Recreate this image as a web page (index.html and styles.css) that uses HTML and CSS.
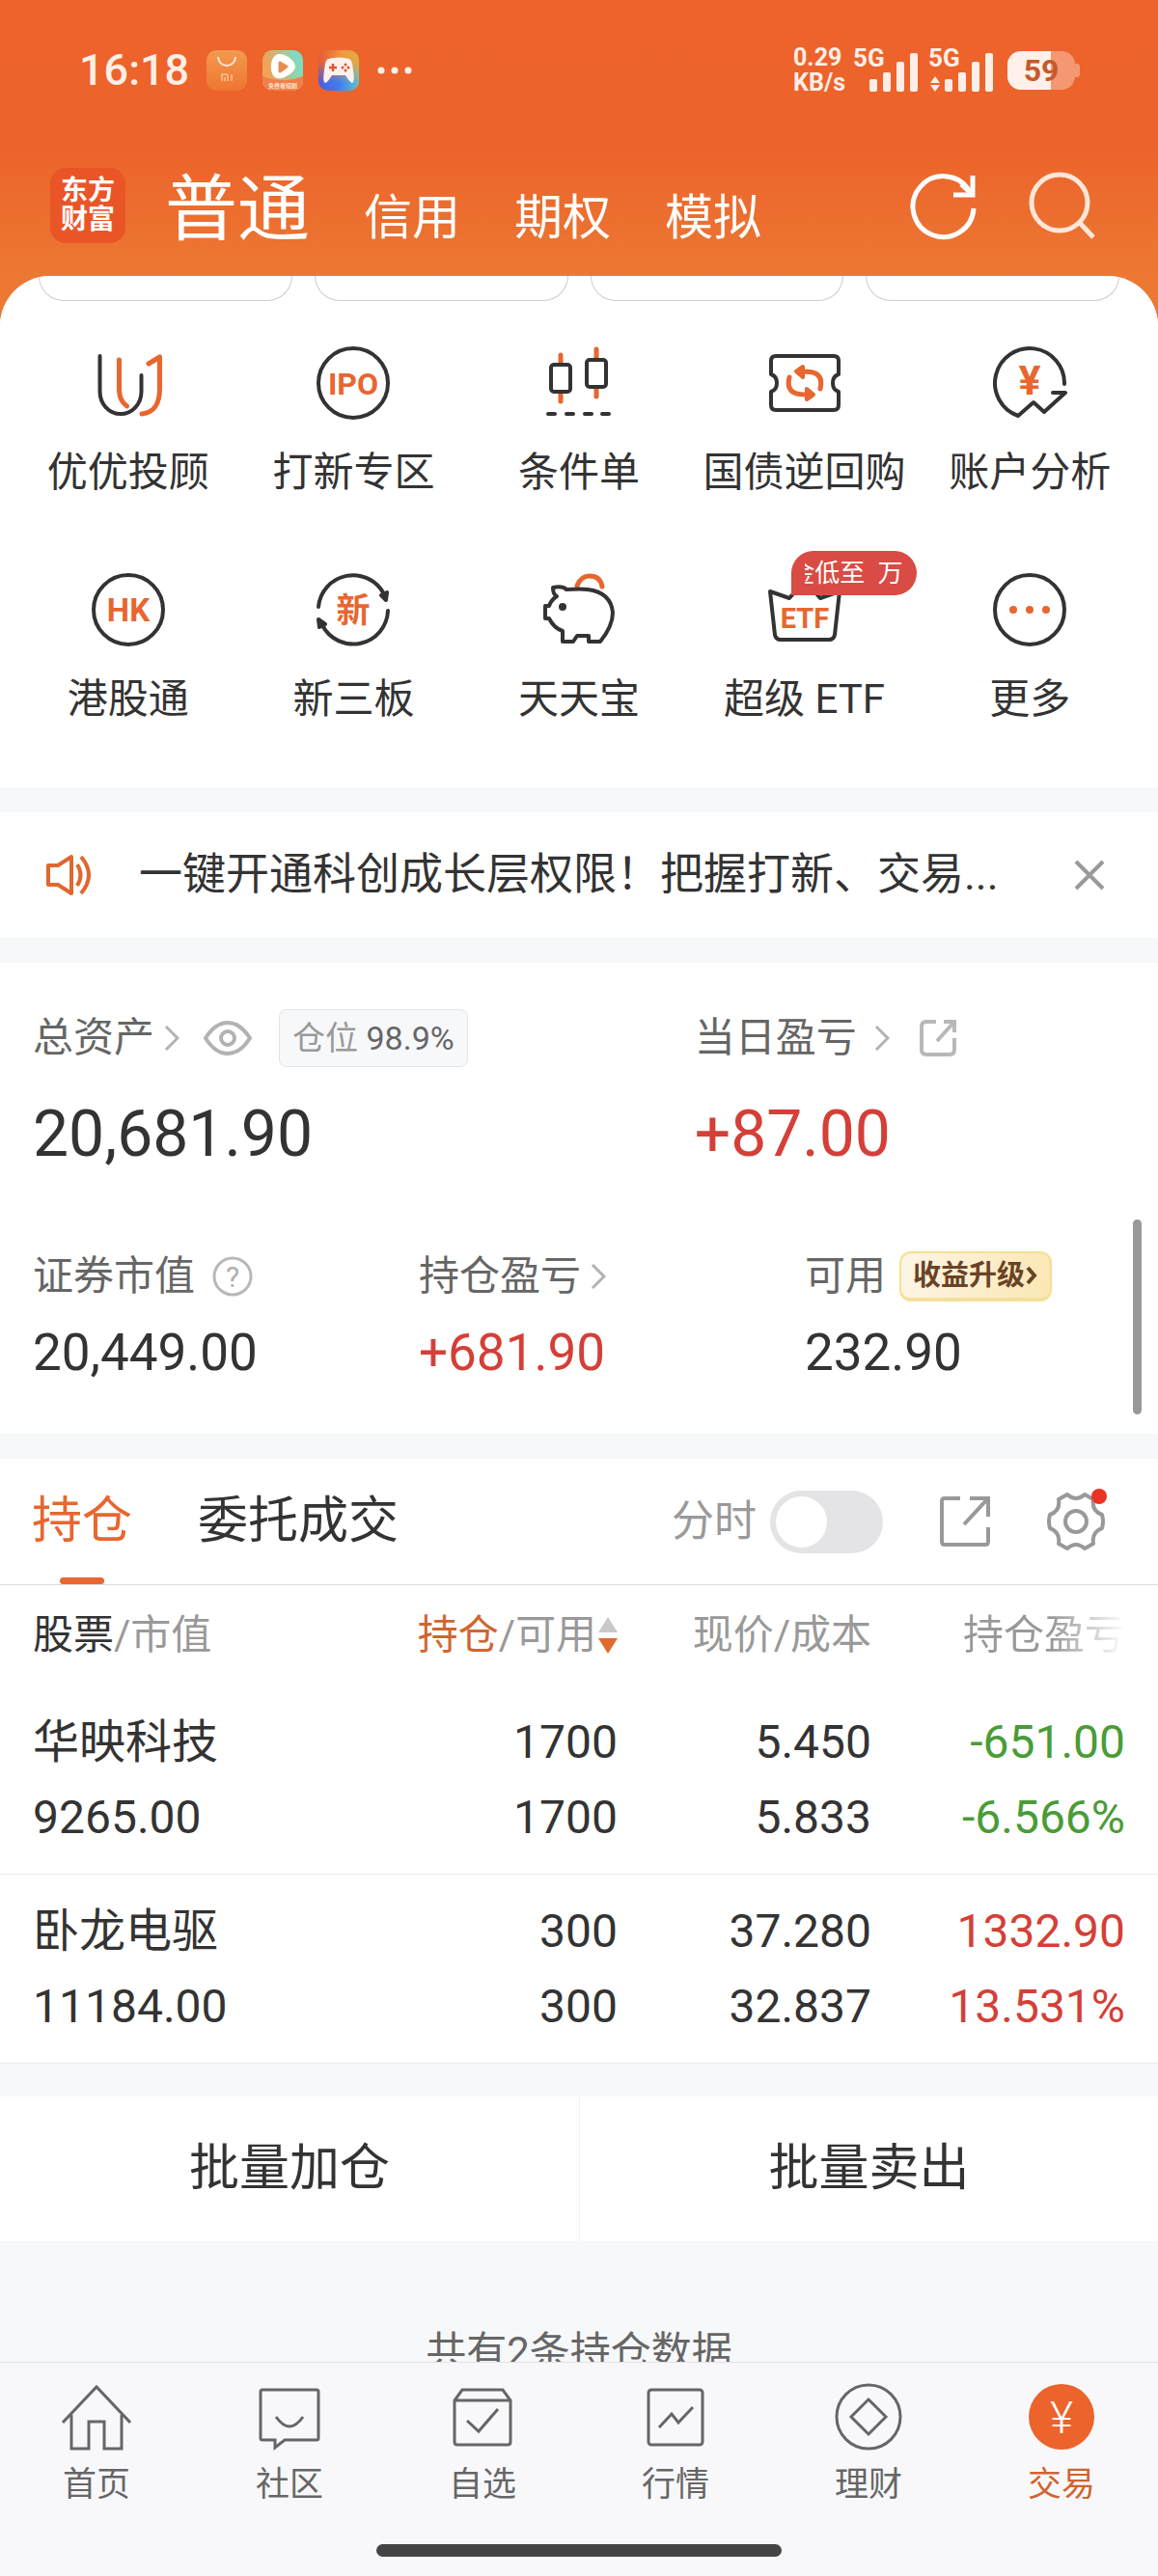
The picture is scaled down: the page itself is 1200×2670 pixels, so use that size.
FILE: index.html
```html
<!DOCTYPE html>
<html lang="zh-CN">
<head>
  <meta charset="UTF-8">
  <meta name="viewport" content="width=device-width, initial-scale=1.0">
  <title>东方财富 - 交易</title>
  <link rel="stylesheet" href="styles.css">
</head>
<body>
<div class="app">

  <div class="status-bar">
    <span class="time">16:18</span>
    <svg class="app-icon" width="42" height="42" viewBox="0 0 42 42">
      <defs>
        <linearGradient id="bag" x1="0" y1="0" x2="0" y2="1"><stop offset="0" stop-color="#f39a50"/><stop offset="1" stop-color="#ef7531"/></linearGradient>
      </defs>
      <rect width="42" height="42" rx="10" fill="url(#bag)"/>
      <path d="M12 7a9 9 0 0 0 18 0" fill="none" stroke="#ffe9d8" stroke-width="2"/>
      <path d="M16 32v-7h4q2 0 2 2v5M19 28v4M26 25v7" fill="none" stroke="#fcc79c" stroke-width="1.4"/>
    </svg>
    <svg class="app-icon" width="42" height="42" viewBox="0 0 42 42">
      <defs>
        <linearGradient id="video" x1="0" y1="0.3" x2="1" y2="0"><stop offset="0.1" stop-color="#efa458"/><stop offset="0.8" stop-color="#7fdcc0"/></linearGradient>
        <clipPath id="videoClip"><rect width="42" height="42" rx="10"/></clipPath>
      </defs>
      <g clip-path="url(#videoClip)">
        <rect width="42" height="42" fill="url(#video)"/>
        <path d="M0 27q21 8 42 0v15H0z" fill="#f08049"/>
        <path d="M14 5c5-4 20 4 20 12 0 6-13 14-19 12-8-2-8-20-1-24z" fill="#fff"/>
        <path d="M18 13l7 4-7 5z" fill="#e98b4f" stroke="#e98b4f" stroke-width="3" stroke-linejoin="round"/>
        <text x="21" y="39" font-size="6" font-weight="700" text-anchor="middle" fill="#ffe1cd">免费看短剧</text>
      </g>
    </svg>
    <svg class="app-icon" width="42" height="42" viewBox="0 0 42 42">
      <defs>
        <linearGradient id="gameTop"><stop offset="0" stop-color="#e55a3c"/><stop offset="0.6" stop-color="#f09a3e"/><stop offset="1" stop-color="#dcae45"/></linearGradient>
        <linearGradient id="gameBottom"><stop offset="0" stop-color="#4a5fe0"/><stop offset="0.5" stop-color="#3f7df0"/><stop offset="1" stop-color="#5fc4c8"/></linearGradient>
        <linearGradient id="fade" x1="0" y1="0" x2="0" y2="1"><stop offset="0.3" stop-color="#000"/><stop offset="0.8" stop-color="#fff"/></linearGradient>
        <mask id="gameMask"><rect width="42" height="42" fill="url(#fade)"/></mask>
      </defs>
      <rect width="42" height="42" rx="10" fill="url(#gameTop)"/>
      <rect width="42" height="42" rx="10" fill="url(#gameBottom)" mask="url(#gameMask)"/>
      <path d="M10 9q11-3 22 0 3 1 4 12 2 12-1 13-2 0-7-8H14q-5 8-7 8-3-1-1-13 1-11 4-12z" fill="#fdf1ee"/>
      <path d="M15 14v8M11 18h8" stroke="#e0552f" stroke-width="2.4"/>
      <g fill="#e0552f"><circle cx="28" cy="15" r="1.5"/><circle cx="28" cy="21" r="1.5"/><circle cx="25" cy="18" r="1.5"/><circle cx="31" cy="18" r="1.5"/></g>
    </svg>
    <svg class="more-dots" width="36" height="10" viewBox="0 0 36 10" fill="#ffeee6">
      <circle cx="4" cy="5" r="3.5"/><circle cx="18" cy="5" r="3.5"/><circle cx="32" cy="5" r="3.5"/>
    </svg>

    <div class="status-right">
      <div class="net-speed">0.29<br>KB/s</div>
      <svg width="70" height="64" viewBox="0 -8 70 64" fill="#ffeee6">
        <text x="0" y="20" font-size="26" font-weight="700">5G</text>
        <rect x="17" y="33" width="8" height="13" rx="2"/><rect x="31" y="26" width="8" height="20" rx="2"/>
        <rect x="45" y="15" width="8" height="31" rx="2"/><rect x="59" y="6" width="8" height="40" rx="2"/>
      </svg>
      <svg width="70" height="64" viewBox="0 -8 70 64" fill="#ffeee6">
        <text x="0" y="20" font-size="26" font-weight="700">5G</text>
        <path d="M7 30l5 7H2zM7 46l5-7H2z"/>
        <rect x="17" y="33" width="8" height="13" rx="2"/><rect x="31" y="26" width="8" height="20" rx="2"/>
        <rect x="45" y="15" width="8" height="31" rx="2"/><rect x="59" y="6" width="8" height="40" rx="2"/>
      </svg>
      <svg class="battery" width="76" height="40" viewBox="0 0 76 40">
        <defs><clipPath id="charge"><rect width="45" height="40"/></clipPath></defs>
        <rect width="70" height="40" rx="14" fill="#f59872"/>
        <path d="M70 13h2q3 0 3 3v8q0 3-3 3h-2z" fill="#f59872"/>
        <rect width="70" height="40" rx="14" fill="#fff0ea" clip-path="url(#charge)"/>
        <text x="35" y="31" font-size="32" font-weight="700" text-anchor="middle" fill="#c65a2c">59</text>
      </svg>
    </div>
  </div>

  <header class="top-bar">
    <div class="logo">东方<br>财富</div>
    <nav class="account-tabs">
      <a href="#" class="current">普通</a>
      <a href="#">信用</a>
      <a href="#">期权</a>
      <a href="#">模拟</a>
    </nav>
    <button class="icon-btn" aria-label="刷新">
      <svg width="72" height="72" viewBox="0 0 72 72" fill="none" stroke="#fff" stroke-width="5">
        <path d="M67 39A31.500 31.500 0 1 1 62 20"/><path d="M66 5v20H46"/><path d="M66 25L54 14"/>
      </svg>
    </button>
    <button class="icon-btn" aria-label="搜索">
      <svg width="72" height="72" viewBox="0 0 72 72" fill="none" stroke="#ffe6d8" stroke-width="5">
        <circle cx="32" cy="33" r="29"/><path d="M53 54l14 15"/>
      </svg>
    </button>
  </header>

  <main class="content">
    <section class="panel shortcuts">
      <div class="pills"><span></span><span></span><span></span><span></span></div>
      <div class="shortcut-grid">
        <a href="#" class="shortcut">
          <svg viewBox="0 0 80 80" class="line-icon">
            <path d="M10.500 12v37a21.500 23 0 0 0 43 0V32"/>
            <path class="hot" d="M30.500 16v31q0 11 8 17M61 20l11.500-7v33C72.500 62 66 71 54 72"/>
          </svg>
          <span>优优投顾</span>
        </a>
        <a href="#" class="shortcut">
          <svg viewBox="0 0 80 80" class="line-icon">
            <circle cx="40" cy="40" r="36"/><text x="40" y="52" font-size="32">IPO</text>
          </svg>
          <span>打新专区</span>
        </a>
        <a href="#" class="shortcut">
          <svg viewBox="0 0 80 80" class="line-icon">
            <path class="hot" d="M21 11v9M21 51v8M58 5v9M58 46v8"/>
            <rect x="11" y="21" width="20" height="28" rx="3"/><rect x="48" y="16" width="20" height="28" rx="3"/>
            <path d="M8 72h7M27 72h7M46 72h7M64 72h7"/>
          </svg>
          <span>条件单</span>
        </a>
        <a href="#" class="shortcut">
          <svg viewBox="0 0 80 80" class="line-icon">
            <path d="M10 12h60q5 0 5 5v14q-6 2-6 9t6 9v14q0 5-5 5H10q-5 0-5-5V49q6-2 6-9t-6-9V17q0-5 5-5z"/>
            <path class="hot" d="M24 34q-3 12 5 16 4 2 13 2M56 46q3-12-5-16-4-2-13-2"/>
            <path class="hot-fill" d="M42 46l7 6-7 5zM38 23l-7 5 7 6z"/>
          </svg>
          <span>国债逆回购</span>
        </a>
        <a href="#" class="shortcut">
          <svg viewBox="0 0 80 80" class="line-icon">
            <path d="M76 41A36 36 0 1 0 28 74l16-14 11 10 22-20H64"/><text x="40" y="52" font-size="43">¥</text>
          </svg>
          <span>账户分析</span>
        </a>
        <a href="#" class="shortcut">
          <svg viewBox="0 0 80 80" class="line-icon">
            <circle cx="40" cy="40" r="36"/><text x="40" y="52" font-size="33">HK</text>
          </svg>
          <span>港股通</span>
        </a>
        <a href="#" class="shortcut">
          <svg viewBox="0 0 80 80" class="line-icon">
            <path d="M4 37A36 36 0 0 1 72 24M76 41A36 36 0 0 1 8 56"/>
            <path class="dark-fill" d="M69 25l6-3-1 8zM11 55l-6 3-1-8z"/>
            <text x="40" y="53" font-size="35">新</text>
          </svg>
          <span>新三板</span>
        </a>
        <a href="#" class="shortcut">
          <svg viewBox="0 0 80 80" class="line-icon">
            <path class="hot" d="M38 15q4-10 13-10 11 0 13 11"/>
            <path d="M13 17q10-2 14 2 15-1 22 0 24 3 26 24 0 14-13 30H50v-6H38l-4 6H23V62Q14 59 9 49H5V36h4q2-6 8-10-4-2-4-9z"/>
            <circle class="dark-fill" cx="23" cy="37" r="2"/>
          </svg>
          <span>天天宝</span>
        </a>
        <a href="#" class="shortcut">
          <svg viewBox="0 0 80 80" class="line-icon">
            <path d="M4 21l20 7 16-18 16 18 20-7-5 45q-1 5-6 5H15q-5 0-6-5z"/><text x="40" y="59" font-size="29">ETF</text>
          </svg>
          <em class="promo"><b>佣金低至&ensp;万</b></em>
          <span>超级 ETF</span>
        </a>
        <a href="#" class="shortcut">
          <svg viewBox="0 0 80 80" class="line-icon">
            <circle cx="40" cy="40" r="36"/>
            <g class="hot-fill"><circle cx="23" cy="40" r="2"/><circle cx="40" cy="40" r="2"/><circle cx="57" cy="40" r="2"/></g>
          </svg>
          <span>更多</span>
        </a>
      </div>
    </section>

    <section class="panel notice">
      <svg width="50" height="44" viewBox="0 0 50 44" fill="none" stroke="#e0672f" stroke-width="4" stroke-linejoin="round">
        <path d="M2 12h10L26 3v38L12 32H2z"/><path d="M32 11q7 11 0 22M36 3q16 19 0 38"/>
      </svg>
      <p>一键开通科创成长层权限！把握打新、交易...</p>
      <button class="close" aria-label="关闭">
        <svg width="32" height="32" viewBox="0 0 32 32" fill="none" stroke="#999" stroke-width="4"><path d="M2 2l28 28M30 2L2 30"/></svg>
      </button>
    </section>

    <section class="panel assets">
      <div class="asset-row main-row">
        <div>
          <div class="label">
            总资产
            <svg class="chevron" viewBox="0 0 16 28"><path d="M2 2l12 12L2 26"/></svg>
            <button class="eye" aria-label="隐藏金额">
              <svg width="50" height="36" viewBox="0 0 50 36" fill="none" stroke="#b2b2b2" stroke-width="4">
                <path d="M2 18Q12 2 25 2t23 16Q38 34 25 34T2 18z"/><circle cx="25" cy="18" r="7"/>
              </svg>
            </button>
            <span class="position">仓位 <b>98.9%</b></span>
          </div>
          <div class="amount">20,681.90</div>
        </div>
        <div>
          <div class="label">
            当日盈亏
            <svg class="chevron wide" viewBox="0 0 16 28"><path d="M2 2l12 12L2 26"/></svg>
            <svg class="share" width="40" height="40" viewBox="0 0 40 40" fill="none" stroke="#b8b8b8" stroke-width="4">
              <path d="M18 3H8q-5 0-5 5v24q0 5 5 5h24q5 0 5-5V20M26 3h11v11M37 3L19 23"/>
            </svg>
          </div>
          <div class="amount up">+87.00</div>
        </div>
      </div>
      <div class="asset-row sub-row">
        <div>
          <div class="label">
            证券市值
            <svg class="help" width="42" height="42" viewBox="0 0 42 42" fill="none" stroke="#b8b8b8" stroke-width="3">
              <circle cx="21" cy="21" r="19"/><text x="21" y="32" font-size="30" text-anchor="middle" fill="#b0b0b0" stroke="none">?</text>
            </svg>
          </div>
          <div class="value">20,449.00</div>
        </div>
        <div>
          <div class="label">
            持仓盈亏
            <svg class="chevron" viewBox="0 0 16 28"><path d="M2 2l12 12L2 26"/></svg>
          </div>
          <div class="value up">+681.90</div>
        </div>
        <div>
          <div class="label">
            可用
            <a href="#" class="upgrade">收益升级<svg width="14" height="20" viewBox="0 0 14 20" fill="none" stroke="#6a4327" stroke-width="4"><path d="M3 2l7 8-7 8"/></svg></a>
          </div>
          <div class="value">232.90</div>
        </div>
      </div>
      <i class="scroll-thumb"></i>
    </section>

    <section class="panel holdings">
      <div class="tabs">
        <button class="tab active">持仓</button>
        <button class="tab">委托成交</button>
        <label class="switch">分时<input type="checkbox"></label>
        <button class="tool" aria-label="分享">
          <svg width="54" height="54" viewBox="0 0 54 54" fill="none" stroke="#999" stroke-width="4">
            <path d="M22 3H6q-3 0-3 3v42q0 3 3 3h42q3 0 3-3V33M32 3h19v19M51 3L26 30"/>
          </svg>
        </button>
        <button class="tool gear" aria-label="设置">
          <svg width="60" height="60" viewBox="0 0 60 60" fill="none" stroke="#999" stroke-width="4" stroke-linejoin="round">
            <path d="M21 2q9 8 18 0l9 5q-2 12 9 16 2 7 0 14-11 4-9 16l-9 5q-9-8-18 0l-9-5q2-12-9-16-2-7 0-14 11-4 9-16z"/>
            <circle cx="30" cy="30" r="11"/>
          </svg>
          <i class="dot"></i>
        </button>
      </div>

      <table>
        <thead>
          <tr>
            <th><b>股票</b>/市值</th>
            <th><b class="sorted">持仓</b>/可用<svg class="sort" width="20" height="38" viewBox="0 0 20 38"><path d="M10 0l10 16H0z" fill="#c9c9c9"/><path d="M10 38l10-16H0z" fill="#e0692f"/></svg></th>
            <th>现价/成本</th>
            <th><span class="faded">持仓盈亏</span></th>
          </tr>
        </thead>
        <tbody>
          <tr>
            <td>华映科技<br>9265.00</td>
            <td>1700<br>1700</td>
            <td>5.450<br>5.833</td>
            <td class="down">-651.00<br>-6.566%</td>
          </tr>
          <tr>
            <td>卧龙电驱<br>11184.00</td>
            <td>300<br>300</td>
            <td>37.280<br>32.837</td>
            <td class="up">1332.90<br>13.531%</td>
          </tr>
        </tbody>
      </table>
    </section>

    <div class="batch">
      <button>批量加仓</button>
      <button>批量卖出</button>
    </div>

    <p class="total">共有2条持仓数据</p>
  </main>

  <footer class="bottom-bar">
    <nav class="bottom-nav">
      <a href="#">
        <svg viewBox="0 0 72 72"><path d="M1 42L36 5l35 37M10 34v35h18V41h16v28h18V34"/></svg>
        首页
      </a>
      <a href="#">
        <svg viewBox="0 0 72 72"><path d="M8 8h56q2 0 2 2v48q0 2-2 2H31l-10 8v-8H8q-2 0-2-2V10q0-2 2-2z"/><path d="M22 36q14 20 28 0"/></svg>
        社区
      </a>
      <a href="#">
        <svg viewBox="0 0 72 72"><path d="M15 8h42l8 11v43q0 3-3 3H10q-3 0-3-3V19zM7 19h58M20 40l12 11 20-23"/></svg>
        自选
      </a>
      <a href="#">
        <svg viewBox="0 0 72 72"><rect x="8" y="8" width="56" height="57" rx="3"/><path d="M19 47l13-14 7 9 15-16"/></svg>
        行情
      </a>
      <a href="#">
        <svg viewBox="0 0 72 72"><circle cx="36" cy="36" r="33"/><path d="M36 18l18 18-18 18-18-18z"/></svg>
        理财
      </a>
      <a href="#" class="active">
        <svg viewBox="0 0 72 72"><circle cx="36" cy="36" r="34"/><text x="36" y="53" font-size="46">¥</text></svg>
        交易
      </a>
    </nav>
    <div class="home-indicator"></div>
  </footer>

</div>
</body>
</html>
```
FILE: styles.css
```css
* {
  box-sizing: border-box;
}

body {
  margin: 0;
  font-family: Roboto, "Noto Sans CJK SC", sans-serif;
  font-size: 42px;
  line-height: 1.2;
  color: #333;
}

a {
  color: inherit;
  text-decoration: none;
}

button {
  padding: 0;
  border: none;
  background: none;
  font: inherit;
  color: inherit;
}

p {
  margin: 0;
}

svg {
  display: block;
  flex: none;
}

.app {
  display: flex;
  flex-direction: column;
  height: 100vh;
  background: linear-gradient(#ed632b 0, #ec632b 150px, #ec7833 286px);
}

/* status bar */
.status-bar {
  display: flex;
  align-items: center;
  height: 146px;
  padding: 0 80px 0 82px;
  color: #ffeee6;
}

.time {
  margin-right: 2px;
  font-size: 45px;
  font-weight: 500;
}

.app-icon {
  margin-left: 16px;
}

.more-dots {
  margin-left: 19px;
}

.status-right {
  display: flex;
  align-items: center;
  gap: 8px;
  margin-left: auto;
}

.net-speed {
  font-size: 25px;
  font-weight: 700;
  line-height: 26px;
}

.battery {
  margin-left: 4px;
}

/* title bar */
.top-bar {
  display: flex;
  align-items: center;
  height: 140px;
  padding: 0 62px 6px 52px;
  color: #fff;
}

.logo {
  width: 78px;
  padding: 9px 0;
  border-radius: 16px;
  background: #ea5528;
  font-size: 28px;
  font-weight: 700;
  line-height: 30px;
  text-align: center;
}

.account-tabs {
  display: flex;
  align-items: baseline;
  gap: 56px;
  flex: 1;
  margin-left: 41px;
  padding-top: 16px;
  font-size: 50px;
  line-height: 76px;
}

.account-tabs .current {
  font-size: 75px;
}

.icon-btn {
  margin-left: 52px;
}

/* scroll area */
.content {
  flex: 1;
  min-height: 0;
  overflow: hidden;
  border-radius: 52px 52px 0 0;
  background: #f7f8fa;
}

.panel {
  position: relative;
  margin-bottom: 26px;
  background: #fff;
}

.up {
  color: #d43f38;
}

.down {
  color: #4a9c35;
}

/* shortcuts */
.pills {
  display: grid;
  grid-template-columns: repeat(4, 1fr);
  gap: 23px;
  padding: 0 40px;
}

.pills span {
  height: 26px;
  border: 1px solid #ccc;
  border-top: none;
  border-radius: 0 0 26px 26px;
}

.shortcut-grid {
  display: grid;
  grid-template-columns: repeat(5, 1fr);
  row-gap: 77px;
  padding: 45px 16px 66px;
}

.shortcut {
  position: relative;
  display: flex;
  flex-direction: column;
  align-items: center;
  gap: 28px;
  line-height: 50px;
  white-space: nowrap;
}

.line-icon {
  width: 80px;
  height: 80px;
  fill: none;
  stroke: #333;
  stroke-width: 4;
  stroke-linecap: round;
  stroke-linejoin: round;
}

.line-icon .hot {
  stroke: #e8662f;
  stroke-width: 5;
}

.line-icon .hot-fill {
  fill: #e8662f;
  stroke: #e8662f;
}

.line-icon .dark-fill {
  fill: #333;
}

.line-icon text {
  fill: #e8662f;
  stroke: none;
  font-weight: 700;
  text-anchor: middle;
}

.promo {
  position: absolute;
  left: 50%;
  top: -21px;
  width: 130px;
  height: 46px;
  margin-left: -14px;
  padding: 0 14px;
  border-radius: 23px 23px 23px 0;
  background: #d94b45;
  color: #fff;
  font-size: 26px;
  font-style: normal;
  line-height: 46px;
}

.promo b {
  display: flex;
  justify-content: flex-end;
  overflow: hidden;
  font-weight: 400;
}

/* notice */
.notice {
  display: flex;
  align-items: center;
  height: 130px;
  padding: 0 55px 0 48px;
  font-size: 45px;
}

.notice p {
  flex: 1;
  margin-left: 46px;
  white-space: nowrap;
}

/* assets */
.assets {
  padding: 48px 0 54px;
}

.asset-row {
  display: grid;
}

.asset-row > div {
  padding-left: 34px;
}

.main-row {
  grid-template-columns: 4fr 3fr;
}

.sub-row {
  grid-template-columns: repeat(3, 1fr);
  margin-top: 81px;
}

.label {
  display: flex;
  align-items: center;
  height: 60px;
  color: #666;
  white-space: nowrap;
}

.sub-row .label {
  height: 52px;
}

.chevron {
  width: 16px;
  height: 28px;
  margin-left: 10px;
  fill: none;
  stroke: #b2b2b2;
  stroke-width: 3;
}

.chevron.wide {
  margin-left: 18px;
}

.eye {
  margin-left: 25px;
}

.position {
  margin-left: 28px;
  padding: 0 13px;
  border: 1px solid #e4e4e6;
  border-radius: 8px;
  background: #f7f8fa;
  color: #999;
  font-size: 34px;
  line-height: 58px;
}

.position b {
  color: #666;
  font-weight: 400;
}

.share {
  margin-left: 30px;
}

.help {
  margin-left: 18px;
}

.upgrade {
  display: flex;
  align-items: center;
  height: 52px;
  margin-left: 14px;
  padding: 0 12px;
  border: 2px solid #f6e08e;
  border-bottom: 4px solid #f4e09a;
  border-radius: 12px;
  background: linear-gradient(100deg, #fdf5e6, #fbe7b4);
  color: #6a4327;
  font-size: 29px;
  font-weight: 700;
}

.amount {
  margin-top: 30px;
  font-size: 66px;
  font-weight: 400;
  line-height: 80px;
}

.value {
  margin-top: 23px;
  font-size: 53px;
  line-height: 60px;
}

.scroll-thumb {
  position: absolute;
  right: 17px;
  bottom: 20px;
  width: 9px;
  height: 202px;
  border-radius: 5px;
  background: #999;
}

/* holdings */
.holdings {
  margin-bottom: 34px;
}

.tabs {
  display: flex;
  align-items: stretch;
  height: 131px;
  padding: 0 55px 0 33px;
  border-bottom: 1px solid #dcdcdc;
}

.tab {
  position: relative;
  margin-right: 68px;
  font-size: 52px;
}

.tab.active {
  color: #e8662f;
}

.tab.active::after {
  content: "";
  position: absolute;
  left: 50%;
  bottom: 0;
  width: 46px;
  height: 7px;
  margin-left: -23px;
  border-radius: 4px;
  background: #e8662f;
}

.switch {
  display: flex;
  align-items: center;
  gap: 14px;
  margin-left: auto;
  color: #999;
  font-size: 44px;
}

.switch input {
  appearance: none;
  width: 117px;
  height: 65px;
  margin: 0;
  border-radius: 33px;
  background: #e4e4e6;
}

.switch input::before {
  content: "";
  display: block;
  width: 53px;
  height: 53px;
  margin: 6px;
  border-radius: 50%;
  background: #fff;
}

.switch input:checked {
  background: #e8662f;
}

.switch input:checked::before {
  margin-left: 58px;
}

.tool {
  position: relative;
  margin-left: 58px;
}

.dot {
  position: absolute;
  right: -2px;
  top: 31px;
  width: 16px;
  height: 16px;
  border-radius: 50%;
  background: #e93323;
}

table {
  width: 100%;
  table-layout: fixed;
  border-collapse: collapse;
}

th,
td {
  padding: 0;
  text-align: right;
  white-space: nowrap;
}

th {
  width: 263px;
  height: 104px;
  color: #999;
  font-weight: 400;
}

th b {
  color: #333;
  font-weight: 400;
}

th .sorted {
  color: #d0662f;
}

th:first-child,
td:first-child {
  width: auto;
  padding-left: 34px;
  text-align: left;
}

th:last-child,
td:last-child {
  width: 297px;
  padding-right: 34px;
}

td {
  padding: 20px 0 19px;
  border-bottom: 1px solid #ececec;
  font-size: 48px;
  line-height: 78px;
}

.sort {
  display: inline-block;
  margin-left: 2px;
  vertical-align: -5px;
}

.faded {
  background: linear-gradient(90deg, #999 55%, #fff);
  background-clip: text;
  color: transparent;
}

/* batch actions */
.batch {
  display: grid;
  grid-template-columns: 1fr 1fr;
  background: #fff;
}

.batch button {
  height: 150px;
  font-size: 52px;
}

.batch button + button {
  border-left: 1px solid #f2f2f2;
}

.total {
  padding-top: 90px;
  color: #666;
  line-height: 50px;
  text-align: center;
}

/* bottom bar */
.bottom-bar {
  padding: 20px 0;
  border-top: 1px solid #e2e2e4;
  background: #f8f8fb;
}

.bottom-nav {
  display: grid;
  grid-template-columns: repeat(6, 1fr);
}

.bottom-nav a {
  display: flex;
  flex-direction: column;
  align-items: center;
  gap: 15px;
  color: #666;
  font-size: 35px;
  line-height: 40px;
}

.bottom-nav svg {
  width: 72px;
  height: 72px;
  fill: none;
  stroke: #666;
  stroke-width: 3;
}

.bottom-nav .active {
  color: #cf6433;
}

.bottom-nav .active circle {
  fill: #ec632b;
  stroke: none;
}

.bottom-nav .active text {
  fill: #fff;
  stroke: none;
  font-weight: 300;
  text-anchor: middle;
}

.home-indicator {
  width: 420px;
  height: 13px;
  margin: 41px auto 0;
  border-radius: 7px;
  background: #444;
}
```
